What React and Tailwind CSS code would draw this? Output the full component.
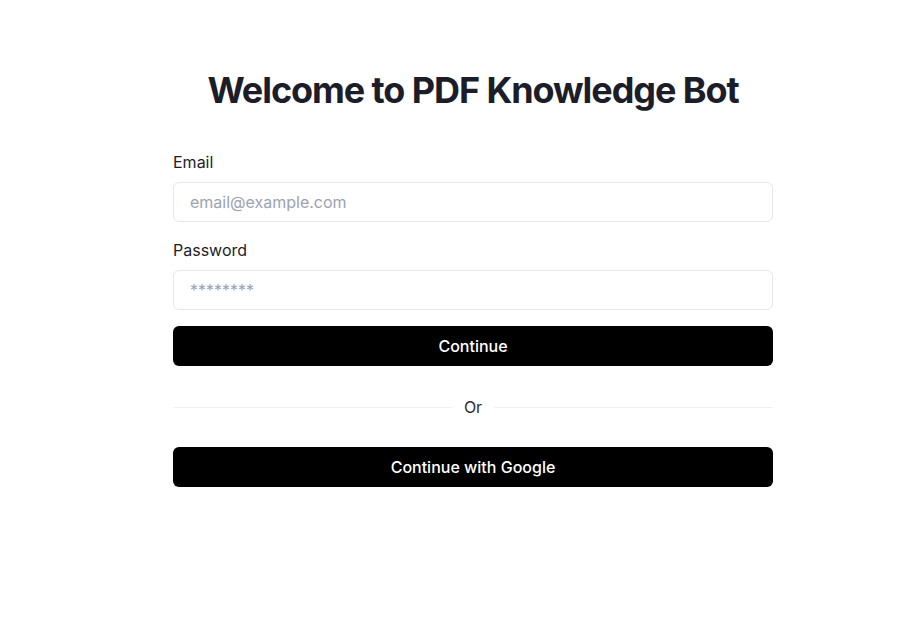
export default function App() {
  return (
    <div className="min-h-screen bg-white flex justify-center pt-[70px] pl-[26px]" style={{ fontFamily: 'Inter, "Noto Sans", sans-serif' }}>
      <div className="w-[600px]">
        <h1 className="text-[36px] leading-[40px] font-bold text-center text-[#1c1d29] tracking-[-0.03em]">
          Welcome to PDF Knowledge Bot
        </h1>

        <div className="mt-10">
          <label className="block text-base leading-6 text-[#1c1d29] mb-2">Email</label>
          <input
            type="email"
            placeholder="email@example.com"
            className="block w-full h-10 px-4 border border-[#e5e7eb] rounded-md text-base text-[#1c1d29] placeholder:text-[#9ca3af] outline-none"
          />
        </div>

        <div className="mt-4">
          <label className="block text-base leading-6 text-[#1c1d29] mb-2">Password</label>
          <input
            type="password"
            placeholder="********"
            className="block w-full h-10 px-4 border border-[#e5e7eb] rounded-md text-base text-[#1c1d29] placeholder:text-[#9ca3af] outline-none"
          />
        </div>

        <button className="mt-4 w-full h-10 bg-black text-white rounded-md text-base font-medium">
          Continue
        </button>

        <div className="flex items-center mt-[29px] mb-7">
          <div className="flex-1 h-px bg-[#f1f1f3]"></div>
          <span className="px-3 text-base leading-6 text-[#2a2b36]">Or</span>
          <div className="flex-1 h-px bg-[#f1f1f3]"></div>
        </div>

        <button className="w-full h-10 bg-black text-white rounded-md text-base font-medium">
          Continue with Google
        </button>
      </div>
    </div>
  )
}
